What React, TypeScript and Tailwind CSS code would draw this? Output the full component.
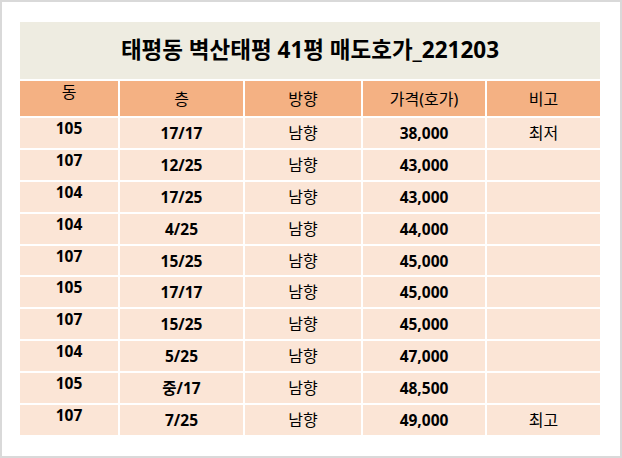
import React from 'react';

type Row = { dong: string; floor: string; dir: string; price: string; note: string };

const rows: Row[] = [
    { dong: '105', floor: '17/17', dir: '남향', price: '38,000', note: '최저' },
    { dong: '107', floor: '12/25', dir: '남향', price: '43,000', note: '' },
    { dong: '104', floor: '17/25', dir: '남향', price: '43,000', note: '' },
    { dong: '104', floor: '4/25', dir: '남향', price: '44,000', note: '' },
    { dong: '107', floor: '15/25', dir: '남향', price: '45,000', note: '' },
    { dong: '105', floor: '17/17', dir: '남향', price: '45,000', note: '' },
    { dong: '107', floor: '15/25', dir: '남향', price: '45,000', note: '' },
    { dong: '104', floor: '5/25', dir: '남향', price: '47,000', note: '' },
    { dong: '105', floor: '중/17', dir: '남향', price: '48,500', note: '' },
    { dong: '107', floor: '7/25', dir: '남향', price: '49,000', note: '최고' },
];

const font = "font-['Noto_Sans','Noto_Sans_CJK_KR',sans-serif]";

const App: React.FC = () => {
    return (
        <div className={`w-[622px] h-[458px] bg-white border-2 border-[#d9d9d9] pt-[20px] pl-[18px] text-black ${font}`}>
            <div className="grid grid-cols-[98px_123px_116px_122px_113px] gap-[2px] w-[580px]">
                {/* Title */}
                <div className="col-span-5 h-[57px] bg-[#eeece1] flex items-center justify-center text-[22.5px] font-bold leading-none">
                    태평동 벽산태평 41평 매도호가_221203
                </div>

                {/* Header */}
                <div className="h-[35px] bg-[#f4b183] flex justify-center items-start pt-[1px] text-[16px] leading-[20px]">동</div>
                <div className="h-[35px] bg-[#f4b183] flex justify-center items-center text-[16px] leading-[20px]">층</div>
                <div className="h-[35px] bg-[#f4b183] flex justify-center items-center text-[16px] leading-[20px]">방향</div>
                <div className="h-[35px] bg-[#f4b183] flex justify-center items-center text-[16px] leading-[20px]">가격(호가)</div>
                <div className="h-[35px] bg-[#f4b183] flex justify-center items-center text-[16px] leading-[20px]">비고</div>

                {/* Data */}
                {rows.map((r, i) => (
                    <React.Fragment key={i}>
                        <div className="h-[29.9px] bg-[#fbe5d6] flex justify-center items-start text-[15.5px] leading-[20px] font-bold">{r.dong}</div>
                        <div className="h-[29.9px] bg-[#fbe5d6] flex justify-center items-center text-[15.5px] leading-[20px] font-bold">{r.floor}</div>
                        <div className="h-[29.9px] bg-[#fbe5d6] flex justify-center items-center text-[16px] leading-[20px]">{r.dir}</div>
                        <div className="h-[29.9px] bg-[#fbe5d6] flex justify-center items-center text-[15.5px] leading-[20px] font-bold">{r.price}</div>
                        <div className="h-[29.9px] bg-[#fbe5d6] flex justify-center items-center text-[16px] leading-[20px]">{r.note}</div>
                    </React.Fragment>
                ))}
            </div>
        </div>
    );
};

export default App;
